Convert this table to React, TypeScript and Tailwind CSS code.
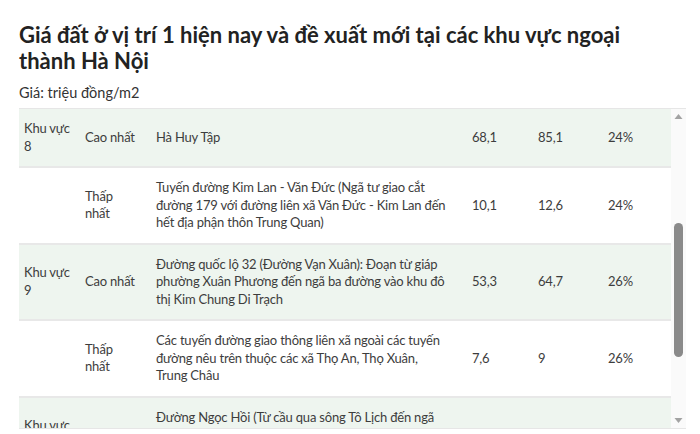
import React from 'react'

type Row = {
  area: string[]
  level: string[]
  road: string[]
  current: string
  proposed: string
  rise: string
  shaded: boolean
}

const rows: Row[] = [
  {
    area: ['Khu vực', '8'],
    level: ['Cao nhất'],
    road: ['Hà Huy Tập'],
    current: '68,1',
    proposed: '85,1',
    rise: '24%',
    shaded: true,
  },
  {
    area: [],
    level: ['Thấp', 'nhất'],
    road: [
      'Tuyến đường Kim Lan - Văn Đức (Ngã tư giao cắt',
      'đường 179 với đường liên xã Văn Đức - Kim Lan đến',
      'hết địa phận thôn Trung Quan)',
    ],
    current: '10,1',
    proposed: '12,6',
    rise: '24%',
    shaded: false,
  },
  {
    area: ['Khu vực', '9'],
    level: ['Cao nhất'],
    road: [
      'Đường quốc lộ 32 (Đường Vạn Xuân): Đoạn từ giáp',
      'phường Xuân Phương đến ngã ba đường vào khu đô',
      'thị Kim Chung Di Trạch',
    ],
    current: '53,3',
    proposed: '64,7',
    rise: '26%',
    shaded: true,
  },
  {
    area: [],
    level: ['Thấp', 'nhất'],
    road: [
      'Các tuyến đường giao thông liên xã ngoài các tuyến',
      'đường nêu trên thuộc các xã Thọ An, Thọ Xuân,',
      'Trung Châu',
    ],
    current: '7,6',
    proposed: '9',
    rise: '26%',
    shaded: false,
  },
  {
    area: ['Khu vực', '10'],
    level: ['Cao nhất'],
    road: [
      'Đường Ngọc Hồi (Từ cầu qua sông Tô Lịch đến ngã',
      'ba Văn Điển)',
      'giao cắt',
    ],
    current: '60,2',
    proposed: '75,6',
    rise: '26%',
    shaded: true,
  },
]

function Lines({ lines }: { lines: string[] }) {
  return (
    <>
      {lines.map((l, i) => (
        <span key={i} className="block whitespace-nowrap">
          {l}
        </span>
      ))}
    </>
  )
}

export default function App() {
  return (
    <div
      className="w-[700px] h-[434px] overflow-hidden bg-white text-[#333]"
      style={{ fontFamily: 'Lato, "Noto Sans", sans-serif' }}
    >
      <div className="pl-[19px] pt-[22px]">
        {/* Heading */}
        <h1 className="text-[22px] leading-[26px] font-bold text-[#222]">
          Giá đất ở vị trí 1 hiện nay và đề xuất mới tại các khu vực ngoại
          <br />
          thành Hà Nội
        </h1>
        <p className="mt-[10px] text-[14.5px] leading-[18px] text-[#333]">
          Giá: triệu đồng/m2
        </p>

        {/* Scrolling table */}
        <div className="mt-[6px] w-[667px] border-t border-b border-[#e6e6e6] flex">
          <div className="w-[652px] h-[319px] overflow-hidden">
            <table className="w-full table-fixed border-collapse text-[13px] tracking-[-0.2px] leading-[17.5px] text-[#3d3d3d]">
              <colgroup>
                <col className="w-[61px]" />
                <col className="w-[71px]" />
                <col className="w-[316px]" />
                <col className="w-[66px]" />
                <col className="w-[70px]" />
                <col />
              </colgroup>
              <tbody>
                {rows.map((r, i) => (
                  <tr
                    key={i}
                    className={`border-b-2 border-[#e8e8e8] ${r.shaded ? 'bg-[#eef5ef]' : 'bg-white'}`}
                  >
                    <td className="px-[5px] py-[11px] align-middle">
                      <Lines lines={r.area} />
                    </td>
                    <td className="px-[5px] py-[11px] align-middle">
                      <Lines lines={r.level} />
                    </td>
                    <td className="px-[5px] py-[11px] align-middle">
                      <Lines lines={r.road} />
                    </td>
                    <td className="px-[5px] py-[11px] align-middle">{r.current}</td>
                    <td className="px-[5px] py-[11px] align-middle">{r.proposed}</td>
                    <td className="px-[5px] py-[11px] align-middle">{r.rise}</td>
                  </tr>
                ))}
              </tbody>
            </table>
          </div>

          {/* Scrollbar */}
          <div className="w-[15px] h-[319px] bg-[#fafafa] flex flex-col items-center">
            <svg width="15" height="15" viewBox="0 0 15 15" className="shrink-0">
              <path d="M3.5 10 L7.5 5 L11.5 10 Z" fill="#a3a3a3" />
            </svg>
            <div className="flex-1 w-full flex flex-col items-center">
              <div className="mt-[99px] w-[9px] h-[134px] rounded-full bg-[#8a8a8a]" />
            </div>
            <svg width="15" height="15" viewBox="0 0 15 15" className="shrink-0">
              <path d="M3.5 5 L11.5 5 L7.5 10 Z" fill="#a3a3a3" />
            </svg>
          </div>
        </div>
      </div>
    </div>
  )
}
